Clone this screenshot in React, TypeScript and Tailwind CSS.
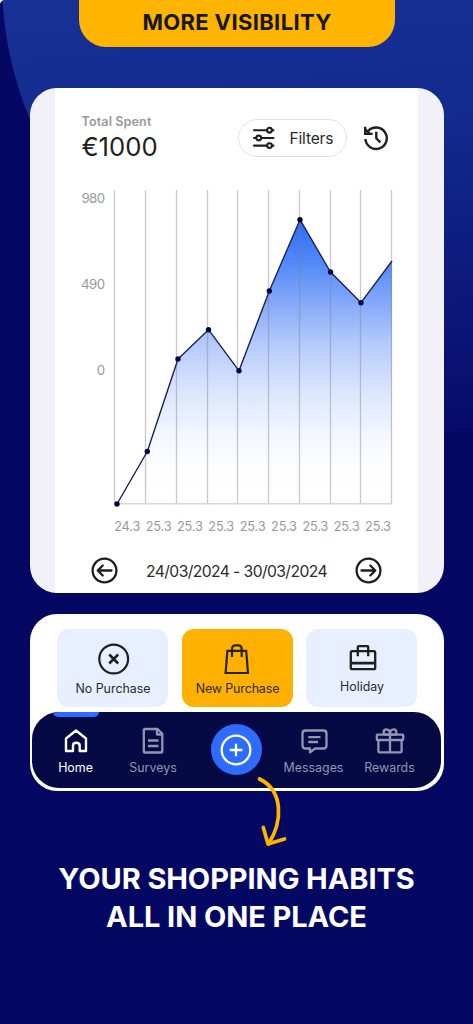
import type { ReactNode } from "react";

interface Point {
  x: number;
  y: number;
}

interface NavItemProps {
  label: string;
  active?: boolean;
  className: string;
  children: ReactNode;
}

const gridLines = [59.5, 90.5, 121.5, 152.5, 182.5, 213.5, 244.5, 275.5, 305.5, 336.5];

const points: Point[] = [
  { x: 62, y: 314 },
  { x: 92.3, y: 261.5 },
  { x: 123, y: 169 },
  { x: 153.5, y: 139.7 },
  { x: 184, y: 180.8 },
  { x: 214.3, y: 101 },
  { x: 245, y: 29.7 },
  { x: 275.5, y: 82 },
  { x: 306, y: 112.7 },
  { x: 337, y: 71 },
];

const days = ["24.3", "25.3", "25.3", "25.3", "25.3", "25.3", "25.3", "25.3", "25.3"];

function Backdrop() {
  return (
    <svg className="absolute inset-0" width="473" height="1024" viewBox="0 0 473 1024">
      <defs>
        <linearGradient id="glow" gradientUnits="userSpaceOnUse" x1="250" y1="0" x2="290" y2="440">
          <stop offset="0" stopColor="#163096" />
          <stop offset="0.3" stopColor="#132a8e" />
          <stop offset="1" stopColor="#070c6b" />
        </linearGradient>
      </defs>
      <path d="M2.5 0C5 40 13 78 31 122C55 215 130 330 240 400C320 440 400 436 473 429V0Z" fill="url(#glow)" />
      <path d="M0 0H4C2 0.5 0.5 2 0 4Z" fill="#fff" />
    </svg>
  );
}

function Chart() {
  const line = points.map((p) => `${p.x},${p.y}`).join(" ");

  return (
    <svg className="block" width="363" height="320" viewBox="0 0 363 320">
      <defs>
        <linearGradient id="area" gradientUnits="userSpaceOnUse" x1="0" y1="30" x2="0" y2="314">
          <stop offset="0" stopColor="#2b6cf9" />
          <stop offset="0.14" stopColor="#4f86f9" />
          <stop offset="0.29" stopColor="#84a9f9" />
          <stop offset="0.44" stopColor="#b5cbfb" />
          <stop offset="0.6" stopColor="#dae5fd" />
          <stop offset="0.75" stopColor="#f2f6fe" />
          <stop offset="0.88" stopColor="#fefeff" />
          <stop offset="1" stopColor="#ffffff" />
        </linearGradient>
      </defs>
      <polygon points={`${line} 337,314 62,314`} fill="url(#area)" />
      {gridLines.map((x) => (
        <line key={x} x1={x} x2={x} y1="0" y2="314.5" stroke="#808086" strokeOpacity="0.42" strokeWidth="1.3" />
      ))}
      <line x1="59" x2="337" y1="313.8" y2="313.8" stroke="#d6d6d8" strokeWidth="1.6" />
      <polyline points={line} fill="none" stroke="#1d2058" strokeWidth="1.4" strokeLinejoin="round" />
      {points.slice(0, -1).map((p) => (
        <circle key={p.x} cx={p.x} cy={p.y} r="2.7" fill="#050546" />
      ))}
      <g fill="#999999" fontFamily="Inter, sans-serif" fontSize="13.3" letterSpacing="-0.6" textAnchor="end">
        <text x="49.5" y="13">980</text>
        <text x="49.5" y="99">490</text>
        <text x="49.5" y="185">0</text>
      </g>
    </svg>
  );
}

function ArrowButton({ flip = false }: { flip?: boolean }) {
  return (
    <button>
      <svg width="27" height="27" viewBox="0 0 27 27" fill="none" stroke="#1f1f1f" strokeWidth="2.3" strokeLinecap="round" strokeLinejoin="round">
        <circle cx="13.5" cy="13.5" r="11.9" />
        <path d={flip ? "M6.5 13.5H20M15.3 8.5L20.3 13.5L15.3 18.5" : "M20.5 13.5H7M11.7 8.5L6.7 13.5L11.7 18.5"} />
      </svg>
    </button>
  );
}

function NavItem({ label, active = false, className, children }: NavItemProps) {
  return (
    <div className={`flex flex-col items-center ${active ? "text-white" : "text-[#9495b0]"} ${className}`}>
      <svg width="30" height="30" viewBox="0 0 30 30" fill="none" stroke="currentColor" strokeWidth="2.3" strokeLinejoin="round">
        {children}
      </svg>
      <span className="mt-[4px] text-[12.4px] leading-4 whitespace-nowrap">{label}</span>
    </div>
  );
}

export default function App() {
  return (
    <div className="relative h-[1024px] w-[473px] overflow-hidden bg-[#050863] font-['Inter',sans-serif]">
      <Backdrop />

      <main className="relative flex flex-col">
        <header className="ml-[79px] flex h-[46.5px] w-[316px] justify-center rounded-b-[27px] bg-[#ffb400]">
          <h1 className="mt-[8px] text-[22px] leading-7 font-bold tracking-[0.35px] whitespace-nowrap text-[#171717]">
            MORE VISIBILITY
          </h1>
        </header>

        <section className="mt-[41px] ml-[29.5px] flex h-[505.5px] w-[414px] justify-center overflow-hidden rounded-[27px] bg-[#f2f1f7]">
          <div className="w-[363px] bg-white">
            <div className="flex h-[102.5px] pl-[26.5px]">
              <div className="w-[156.5px] pt-[26px]">
                <p className="text-[12.6px] leading-4 font-semibold tracking-[0.1px] text-[#999999]">Total Spent</p>
                <p className="mt-[1.5px] text-[25.7px] leading-8 text-[#1f1f1f]">€1000</p>
              </div>
              <button className="mt-[31px] flex h-[38.5px] w-[109px] items-center rounded-full border border-[#e2e2e2] pl-[13px]">
                <svg width="24" height="24" viewBox="0 0 24 24" fill="none" stroke="#1f1f1f" strokeWidth="2.1" strokeLinecap="round">
                  <path d="M2 4.2H15M20 4.2H21.5M2 12H4.2M9.2 12H21.5M2 19.6H15M20 19.6H21.5" />
                  <circle cx="17.5" cy="4.2" r="2.4" />
                  <circle cx="6.7" cy="12" r="2.4" />
                  <circle cx="17.5" cy="19.6" r="2.4" />
                </svg>
                <span className="mt-[2px] ml-[13.5px] text-[15.6px] leading-5 tracking-[-0.2px] text-[#2b2b2b]">Filters</span>
              </button>
              <svg className="mt-[37px] ml-[15.5px]" width="26" height="26" viewBox="0 0 26 26" fill="none" stroke="#1f1f1f" strokeWidth="2.4">
                <path d="M2.4 14A10.7 10.7 0 1 0 5 6.2" />
                <path d="M2.2 1.8V8.9H9.6" />
                <path d="M2.5 4.5L6.5 8.5" />
                <path d="M13.3 6.8V13.3L17.3 17.3" />
              </svg>
            </div>

            <Chart />

            <div className="ml-[56.5px] flex h-[20px]">
              {days.map((day, index) => (
                <span key={index} className="mt-[7px] w-[31.35px] shrink-0 text-center text-[12.8px] leading-5 tracking-[-0.2px] text-[#999999]">
                  {day}
                </span>
              ))}
            </div>

            <div className="mt-[26.5px] ml-[36px] flex w-[291px] items-center justify-between">
              <ArrowButton />
              <span className="mt-[3px] text-[15.7px] leading-5 tracking-[-0.6px] whitespace-nowrap text-[#2b2b2b]">24/03/2024 - 30/03/2024</span>
              <ArrowButton flip />
            </div>
          </div>
        </section>

        <section className="mt-[20.5px] ml-[29.5px] flex h-[177.5px] w-[414px] flex-col overflow-hidden rounded-[27px] bg-white">
          <div className="mt-[15.5px] ml-[27px] flex gap-[14px] text-[12.4px] leading-4 text-[#2b2b2b]">
            <button className="flex h-[78px] w-[111px] flex-col items-center rounded-xl bg-[#e8efff] pt-[13px]">
              <svg className="ml-[3px]" width="34" height="34" viewBox="0 0 34 34" fill="none" stroke="#1f1f1f" strokeWidth="2.2">
                <circle cx="16.7" cy="17" r="14.4" />
                <path d="M12.2 12.5L21.2 21.5M21.2 12.5L12.2 21.5" strokeWidth="2.5" />
              </svg>
              <span className="mt-[4.5px] ml-[2px] whitespace-nowrap">No Purchase</span>
            </button>
            <button className="flex h-[78px] w-[111px] flex-col items-center rounded-xl bg-[#ffb000] pt-[13px]">
              <svg width="34" height="34" viewBox="0 0 34 34" fill="none" stroke="#262313" strokeWidth="2.2">
                <path d="M7.4 8.8H26.2L28 31H5.6Z" />
                <path d="M12 15V7.2Q12 3.4 15.5 3.4H18.2Q21.7 3.4 21.7 7.2V15" />
              </svg>
              <span className="mt-[4.5px] ml-px tracking-[-0.1px] whitespace-nowrap">New Purchase</span>
            </button>
            <button className="-ml-px flex h-[78px] w-[111px] flex-col items-center rounded-xl bg-[#e8efff] pt-[13px]">
              <svg className="ml-[3px]" width="34" height="34" viewBox="0 0 34 34" fill="none" stroke="#1f1f1f" strokeWidth="2.3" strokeLinejoin="round">
                <rect x="4.8" y="9.2" width="24.4" height="18" rx="1.5" />
                <path d="M5 21.2H29" strokeWidth="2.8" />
                <path d="M11.8 14.2V5Q11.8 4.2 12.6 4.2H21.4Q22.2 4.2 22.2 5V14.2" />
              </svg>
              <span className="mt-[3px] ml-[2px]">Holiday</span>
            </button>
          </div>

          <nav className="mt-[5px] ml-[2.5px] flex h-[76px] w-[408.5px] overflow-hidden rounded-[27px] bg-[#050944]">
            <div className="flex w-[87px] flex-col">
              <div className="ml-[21px] h-[4.5px] w-[46px] rounded-b-md bg-[#2d6cff]" />
              <NavItem label="Home" active className="mt-[9.5px]">
                <path d="M5 12.5L15 4.5L25 12.5V25H18.7V19.5Q18.7 16.7 15.3 16.7Q12 16.7 12 19.5V25H5Z" strokeWidth="2.4" />
              </NavItem>
            </div>
            <NavItem label="Surveys" className="w-[68px] pt-[14px]">
              <path d="M7 3H19.5L24.3 7.8V25Q24.3 26.5 23 26.5H7Q5.8 26.5 5.8 25V4.2Q5.8 3 7 3Z" />
              <path d="M19 3.5V8.5H24M10 14.5H20.5M10 20H20.5" />
            </NavItem>
            <button className="mt-[12px] ml-[23.5px] flex size-[51px] items-center justify-center rounded-full bg-[#2d6cff]">
              <svg width="32" height="32" viewBox="0 0 32 32" fill="none" stroke="#fff" strokeWidth="2.3">
                <circle cx="16" cy="16" r="14.3" />
                <path d="M16 9.7V22.3M9.7 16H22.3" />
              </svg>
            </button>
            <NavItem label="Messages" className="ml-[18.5px] w-[67px] pt-[14px]">
              <path d="M6.5 4.5H24.5Q27.5 4.5 27.5 7.5V19.5Q27.5 22.5 24.5 22.5H16L11 26.3V22.5H6.5Q3.5 22.5 3.5 19.5V7.5Q3.5 4.5 6.5 4.5Z" />
              <path d="M9.3 11.2H21.5M9.3 16H19" />
            </NavItem>
            <NavItem label="Rewards" className="ml-[9px] w-[67px] pt-[14px]">
              <rect x="1.8" y="8.7" width="26.4" height="5.3" rx="0.8" />
              <path d="M3.4 14V25Q3.4 26.3 4.8 26.3H25.2Q26.6 26.3 26.6 25V14M15 8.7V26.3" />
              <path d="M15 8.7H11Q8.6 8.7 8.6 6.2Q8.6 3.4 11.5 3.4Q15 3.4 15 8.7Q15 3.4 18.7 3.4Q21.4 3.4 21.4 6.2Q21.4 8.7 19 8.7Z" />
            </NavItem>
          </nav>
        </section>

        {/* pulled up so the arrow starts right under the plus button */}
        <svg className="z-10 -mt-[16px] ml-[254px]" width="40" height="75" viewBox="0 0 40 75" fill="none" stroke="#ffb400" strokeWidth="3.7" strokeLinecap="round" strokeLinejoin="round">
          <path d="M5.5 4C30 16 28.5 47 14.5 69" />
          <path d="M9.3 52.5L14 69L30.5 64" />
        </svg>

        <h2 className="mt-[10px] text-center text-[29px] leading-[37.5px] font-bold tracking-[-0.08px] whitespace-nowrap text-white">
          YOUR SHOPPING HABITS
          <br />
          ALL IN ONE PLACE
        </h2>
      </main>
    </div>
  );
}
